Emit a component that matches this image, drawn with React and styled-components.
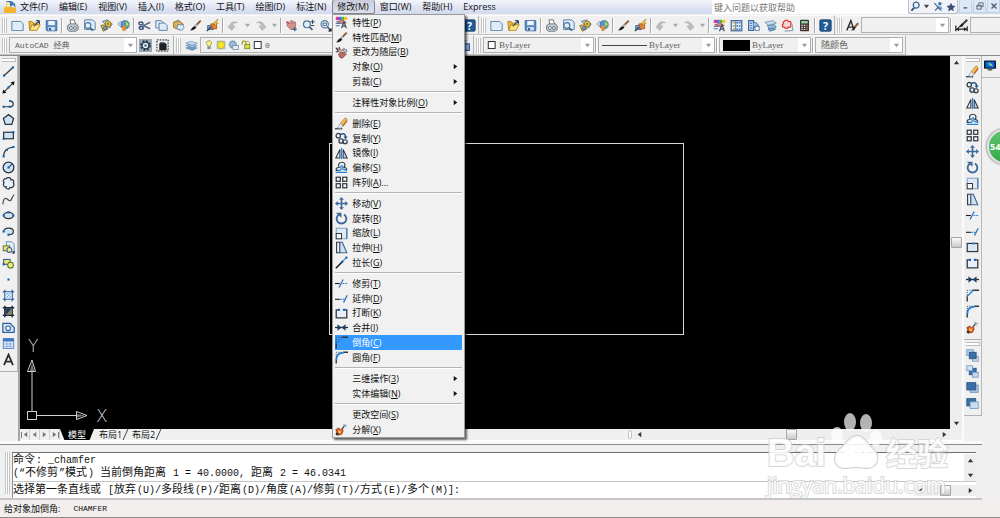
import React from "react";
import styled, { createGlobalStyle, css } from "styled-components";

const Global = createGlobalStyle`
  *, *::before, *::after { box-sizing: border-box; }
  body {
    margin: 0;
    background: #f0f0f0;
    font-family: "Open Sans", "Noto Sans CJK SC", sans-serif;
    font-size: 9px;
    color: #111;
  }
  button, input, select { font: inherit; color: inherit; margin: 0; padding: 0; border: 0; background: none; border-radius: 0; }
  ul { list-style: none; margin: 0; padding: 0; }
`;

/* ---------- icons (16 x 16 grid) ---------- */

const B = "#2f5f9e";
const D = "#30363f";
const L = "#cfe3f5";

const page = (x, y, w, h, fill = "#dcecf9") => (
  <path d={`M${x} ${y}h${w - 3}l3 3v${h - 3}h-${w}z`} fill={fill} stroke="#5d83ab" strokeWidth="1.2" />
);
const dot = (x, y, c = "#1463b4") => <rect key={`${x}-${y}`} x={x - 1.3} y={y - 1.3} width="2.6" height="2.6" fill={c} />;
const lens = (x, y, r = 3.6) => (
  <>
    <path d={`M${x + r - 1} ${y + r - 1}l3.6 3.6`} stroke="#46607f" strokeWidth="2.2" />
    <circle cx={x} cy={y} r={r} fill="#dff0fb" stroke="#4f7399" strokeWidth="1.4" />
  </>
);

const ICONS = {
  new: <>{page(1, 3, 14, 11)}<path d="M3 12.500h10" stroke="#fff" /></>,
  open: <><path d="M1 3h4l1 2h5v8H2z" fill="#e6ba3c" stroke="#a97c1a" /><path d="M2 14l3-7h10l-4 7z" fill="#ffe27a" stroke="#a97c1a" /><path d="M7 9l7-7M14 2v4M14 2h-4" stroke="#3b4a5a" strokeWidth="1.500" fill="none" /></>,
  save: <><path d="M1.500 2h13v12.500h-12l-1-1z" fill="#5b8fca" stroke="#2c5a94" /><rect x="4" y="2.500" width="8" height="5" fill="#eef6fd" /><rect x="4" y="10" width="8" height="4" fill="#dce8f3" /><rect x="5" y="11" width="2.500" height="3" fill="#2c5a94" /></>,
  print: <><path d="M5 1h5l2 6H6z" fill="#fff" stroke="#55606e" /><path d="M2 8l3-2h8l2 3v4l-3 2H4l-2-2z" fill="#c7ced8" stroke="#56616f" /><circle cx="6" cy="11" r="1.800" fill="#fff" stroke="#56616f" /><circle cx="11" cy="11" r="1.800" fill="#e9eef4" stroke="#56616f" /></>,
  preview: <>{page(2, 1, 13, 12)}{lens(6, 8)}</>,
  publish: <><path d="M3 3l6-2 6 5-3 5z" fill="#bcd5ee" stroke="#496b91" /><circle cx="10" cy="6" r="3.500" fill="#f5cf3d" stroke="#8b6a12" /><circle cx="10" cy="6" r="1.300" fill="#7a6a45" /><path d="M1 8l6-1 3 5-6 3z" fill="#f2c43a" stroke="#6d5b26" /><circle cx="6" cy="11" r="2" fill="#7aa4d3" stroke="#2f5f9e" /></>,
  globe: <><path d="M1 6l4-3 4 4-3 4z" fill="#e6eef7" stroke="#6b7f97" /><circle cx="10" cy="7" r="5" fill="#4d94d8" stroke="#39678f" /><path d="M9 2l3 5-2 5 5-3c0-5-2-7-6-7z" fill="#5fb35a" /><path d="M6 9l4-2 1 7-4 1z" fill="#e58b3a" /><path d="M11 4l3 2-2 3z" fill="#f4df60" /></>,
  cut: <><path d="M15 4L6 8.500M15 12L6 8" stroke="#596a80" strokeWidth="1.800" /><ellipse cx="3.600" cy="5.500" rx="2.500" ry="1.800" fill="none" stroke="#31507e" strokeWidth="1.700" /><ellipse cx="4" cy="11" rx="2.500" ry="1.800" fill="none" stroke="#31507e" strokeWidth="1.700" /></>,
  copy2: <>{page(1, 2, 10, 9)}{page(5, 5, 10, 9)}</>,
  paste: <><path d="M2 4l6-2.500 6 5-4 7-8-3z" fill="#e4b54f" stroke="#7f5f1e" /><path d="M7 7l6 0 2 3-3 4-6-2z" fill="#dcecf9" stroke="#5d7ea3" /><path d="M5 3l3-1 1 2-3 1z" fill="#8d97a5" /></>,
  brush: <><path d="M14.500 2L8 8.500" stroke="#8b5a2b" strokeWidth="2.400" /><path d="M9.500 7L6.500 10" stroke="#b9bfc6" strokeWidth="3" /><path d="M7.500 9c-2 0-4 2-6 5 3 0 6-1 7.500-3.500z" fill="#1c1c1c" /></>,
  block: <><path d="M2 8h7v5H2z" fill="#6fa6e0" stroke="#2f5f9e" /><path d="M6 6h7v6H7z" fill="#f0843c" stroke="#a54a16" /><path d="M15 0L8 6h3l-3 4 7-5h-3z" fill="#ffd43b" stroke="#9f6b10" strokeWidth=".7" /><path d="M1 15l5-5" stroke="#333" strokeWidth="1.500" /></>,
  undo: <path d="M3 8.500C4 4 9 2 13 4.500 9 4 7 6 7 9l3-.5L6 14 1 9.500z" fill="#b9bcc0" stroke="#a2a5a9" strokeWidth=".6" />,
  redo: <path d="M13 8.500C12 4 7 2 3 4.500 7 4 9 6 9 9l-3-.5 4 5.500 5-4.500z" fill="#b9bcc0" stroke="#a2a5a9" strokeWidth=".6" />,
  pan: <><path d="M2 4l2-1 3 3V2l2 0 1 4 1-3 2 1 0 6-2 3H7L3 9z" fill="#d99089" stroke="#9c5750" strokeWidth=".8" /><path d="M12 10v5M9.500 12.500h5" stroke="#2c5a94" strokeWidth="1.500" /><path d="M2 3l3 3" stroke="#6d3d3a" /></>,
  zoom: <>{lens(6, 6.500, 4.200)}<path d="M13 1v5M10.500 3.500h5M11 8h4" stroke="#2b3d52" strokeWidth="1.200" /></>,
  zoomwin: <>{lens(7, 6.500, 4.500)}<rect x="5" y="5" width="4" height="3" fill="none" stroke="#3a5a7d" /><path d="M15.500 11v4.500H11z" fill="#111" /></>,
  props: <><rect x="1" y="1" width="4" height="4" fill="#e0349e" /><rect x="5" y="1" width="3" height="4" fill="#3c6ae0" /><rect x="8" y="1" width="3" height="4" fill="#42b54a" /><rect x="11" y="1" width="4" height="4" fill="#f2c522" /><path d="M2 7l7-2 5 3-4 2z" fill="#d9857b" stroke="#7d4a46" strokeWidth=".7" /><path d="M1 9h6M1 12h5" stroke="#4f77ab" strokeWidth="1.500" /><path d="M8 15l3-8 3 8M9 12.500h4" fill="none" stroke="#3d4b60" strokeWidth="1.400" /></>,
  design: <><rect x="1.500" y="2" width="13" height="12.500" fill="#e3effa" stroke="#3f6a9e" strokeWidth="1.500" />{[4, 8, 12].map((y) => <g key={y}><rect x="3.500" y={y - .5} width="2.500" height="2" fill="#d69b2d" /><rect x="8" y={y - .5} width="2" height="2" fill="#3a74b8" /><rect x="11" y={y - .5} width="2" height="2" fill="#3a74b8" /></g>)}<path d="M7 2v12" stroke="#3f6a9e" /></>,
  palette: <><path d="M2 2h6v12H2z" fill="#d7e7f6" stroke="#3f6a9e" strokeWidth="1.500" /><path d="M3.500 5h3M3.500 8h3M3.500 11h3" stroke="#3a74b8" strokeWidth="1.500" /><path d="M8 4c4 0 6 2 6 6l-6 0" fill="#9fc1e4" stroke="#2f5f9e" /><path d="M10 9h5v5h-5z" fill="#fff" stroke="#2f5f9e" /></>,
  sheets: <><path d="M1 4l10-2 4 3-9 3z" fill="#c8dbec" stroke="#6d8fae" /><path d="M4 8l9-1 2 3-8 3z" fill="#9cbfdd" stroke="#527a9f" /><path d="M5 12l8-1 1 2-7 2z" fill="#6fa0cb" stroke="#527a9f" /></>,
  markup: <><path d="M4 3c1-2 4-2 5 0 3-1 4 2 3 4 1 2-1 4-3 3-1 2-4 2-5 0-3 0-3-3-1-4-1-2 0-3 1-3z" fill="#fbd5d5" stroke="#dc3636" strokeWidth="1.500" /><path d="M13.500 6l1 8-10 1" fill="none" stroke="#9aa6b5" strokeWidth="1.600" /></>,
  calc: <><rect x="2.500" y="1" width="11" height="14" rx="1" fill="#35322f" /><rect x="4" y="2.500" width="8" height="3" fill="#8fd49a" />{[7, 9.500, 12].map((y) => [4, 7, 10].map((x) => <rect key={`${x}${y}`} x={x} y={y} width="2" height="1.500" fill={x === 10 ? "#e36d4f" : "#cfcfcf"} />))}</>,
  help: <><rect x="1" y="1" width="14" height="14" rx="1.500" fill="#1f5c97" stroke="#153f69" /><text x="8" y="13" textAnchor="middle" fontSize="13" fontWeight="700" fill="#fff" fontFamily="Open Sans">?</text></>,
  textstyle: <><path d="M1 14L6 2l4 12M3 10h5" fill="none" stroke="#2b3038" strokeWidth="1.800" /><path d="M15 5l-5 6" stroke="#9a5a26" strokeWidth="2.600" /><path d="M10 9l-4 6 6-4z" fill="#222" /></>,
  dimstyle: <><path d="M1 8v7M15 9v6M1 12.500h14" stroke="#222" strokeWidth="1.500" /><path d="M1 12.500l4-2.500v5zM15 12.500l-4-2.500v5z" fill="#222" /><path d="M15 1L8 8" stroke="#3d444d" strokeWidth="2.800" /><path d="M9 5l-6 6 7-2z" fill="#222" /></>,
  gear: <><rect x="0" y="0" width="16" height="16" fill="#9aa7b4" /><circle cx="8" cy="8" r="5" fill="none" stroke="#1f2b38" strokeWidth="3" strokeDasharray="2.200 1.700" /><circle cx="8" cy="8" r="4" fill="#eaf1f8" stroke="#25364a" strokeWidth="1.400" /><circle cx="8" cy="8" r="1.600" fill="#3e6c9f" /></>,
  homews: <><rect x="1" y="1" width="14" height="14" fill="none" stroke="#6a7079" strokeWidth="2" strokeDasharray="2 1.500" /><rect x="4" y="6" width="9" height="8" fill="#1e2227" /><path d="M4 6l1-2h5l3 2z" fill="#33383f" /></>,
  layers: <><path d="M1 11l6-2 8 2-6 3z" fill="#6f9dc7" stroke="#4f7ba5" strokeWidth=".7" /><path d="M1 8l6-2 8 2-6 3z" fill="#94bbdd" stroke="#5580a9" strokeWidth=".7" /><path d="M1 5l6-2 8 2-6 3z" fill="#c5dcef" stroke="#5580a9" strokeWidth=".7" /></>,
  bulb: <><path d="M8 1c4 0 5 4 3 6.500L10 10H6L5 7.500C3 5 4 1 8 1z" fill="#fdf28a" stroke="#8d8a3c" strokeWidth="1.200" /><path d="M6 11h4v3H6z" fill="#9aa8b5" stroke="#57646f" strokeWidth=".8" /></>,
  sun: <><rect x="1" y="1" width="14" height="14" fill="#aac3d6" /><circle cx="8" cy="8" r="6" fill="#f5e32e" stroke="#a39a28" /></>,
  vpfreeze: <><circle cx="7" cy="6.500" r="5" fill="#9bbbd5" stroke="#6a8ba8" strokeWidth="2" strokeDasharray="2 1" /><rect x="7" y="8" width="8" height="6" fill="#e4edf5" stroke="#5f7e9b" /></>,
  lock: <><path d="M2 7V4c0-3 6-3 6 0v4" fill="none" stroke="#9a9b22" strokeWidth="2" /><rect x="6" y="7" width="8" height="7" fill="#d7dd3f" stroke="#82851d" strokeWidth="1.300" /><path d="M9 3c2-2 5 0 5 4" fill="none" stroke="#9a9b22" strokeWidth="1.500" /></>,
  swatch: <rect x="2" y="2.500" width="11" height="11" fill="#fff" stroke="#222" strokeWidth="1.500" />,
  layerprev: <><rect x="2" y="6" width="12" height="8" fill="#8db6de" stroke="#2f5f9e" strokeWidth="1.500" /><path d="M5 6V2h5" fill="none" stroke="#2f5f9e" strokeWidth="1.500" /></>,
  bylayer: <><path d="M3 3l5 2 3-2 4 3-5 3-6-2z" fill="#d9b4ad" stroke="#7b6a69" /><path d="M1 2l3 4M5 1l1 3M1 7l3 0" stroke="#333" strokeWidth="1.300" /><path d="M4 10l5-2 5 2-5 5-3-1z" fill="#bf6e5e" stroke="#6f3a33" strokeWidth=".8" /><path d="M9 5l5-1v4z" fill="#dfe6ee" stroke="#58697e" strokeWidth=".7" /></>,

  line: <><path d="M2 13.500L13.500 3" stroke={D} strokeWidth="1.500" />{dot(2.500, 13)}{dot(13.500, 3)}</>,
  xline: <><path d="M2 14L14 2" stroke={D} strokeWidth="1.500" /><path d="M.5 15.500l1-5 4 4zM15.500.5l-5 1 4 4z" fill="#111" />{dot(8, 8)}</>,
  pline: <><path d="M2 12h8c5 0 5-7 0-7" fill="none" stroke={D} strokeWidth="1.500" />{dot(2, 12)}{dot(9.500, 12)}{dot(10, 5)}</>,
  polygon: <path d="M8 2l6.300 4.700L12 14H4L1.700 6.700z" fill={L} stroke={D} strokeWidth="1.600" />,
  rect: <><rect x="2" y="4" width="12" height="8" fill={L} stroke={D} strokeWidth="1.500" />{dot(2, 12)}{dot(14, 4)}</>,
  arc: <><path d="M2 14C2 7 7 3 14 2.500" fill="none" stroke={D} strokeWidth="1.500" />{dot(2, 14)}{dot(6, 6)}{dot(14, 2.500)}</>,
  circle: <><circle cx="8" cy="8" r="6.600" fill={L} stroke={D} strokeWidth="1.600" /><path d="M8 8l4-4" stroke={B} strokeWidth="1.600" />{dot(8, 8)}</>,
  revcloud: <path d="M5 2c2-2 6-2 6 1.500 3-1 4 2 3 3.500 2 3-1 7-4 6-1 3-6 2-5-1-3 1-4-3-2.500-5-2-3 0-5 2.500-5z" fill="#e6f1fb" stroke={D} strokeWidth="1.500" />,
  spline: <path d="M1 14C2 5 5 6 7 8s4 2 5-1 1-3 3-5" fill="none" stroke="#4b525c" strokeWidth="1.500" />,
  ellipse: <><ellipse cx="8" cy="8" rx="6" ry="3.800" fill={L} stroke={D} strokeWidth="1.500" />{dot(2, 8)}{dot(14, 8)}{dot(8, 4)}</>,
  earc: <><path d="M2 8c1-6 12-5 12 0 0 3-3 4-6 4" fill={L} stroke={D} strokeWidth="1.500" />{dot(2, 8)}{dot(8, 12)}</>,
  insert: <><path d="M5 1h7l3 3v9H7z" fill="#e2eef9" stroke="#4d7bab" /><rect x="1.500" y="6" width="8" height="6" fill="#f2e37c" stroke="#55751f" strokeWidth="1.200" /><circle cx="9" cy="11" r="3" fill="#f7ea8b" stroke={B} strokeWidth="1.300" /><path d="M15.500 12v3.500H12z" fill="#111" /></>,
  makeblock: <><rect x="2" y="3" width="8" height="6" fill="#f4e36a" stroke={B} strokeWidth="1.300" /><circle cx="10.500" cy="10" r="3.500" fill="#f7ea8b" stroke="#55751f" strokeWidth="1.300" />{dot(2, 9)}</>,
  point: dot(8, 8),
  hatch: <><path d="M3.500 1v14M12.500 1v14M1 3.500h14M1 12.500h14" stroke={B} strokeWidth="1.600" /><rect x="4" y="4" width="8" height="8" fill="#d8e9f8" /><path d="M4 8l4-4M4 12l8-8M8 12l4-4" stroke="#6b9ccb" /></>,
  gradient: <><path d="M3.500 1v14M12.500 1v14M1 3.500h14M1 12.500h14" stroke="#1d2940" strokeWidth="1.800" /><rect x="4" y="4" width="8" height="8" fill="#26375c" /><path d="M12 4v8H5z" fill="#8b8a55" /></>,
  region: <><path d="M1 3h9l5 5v6H1z" fill="#cfe3f5" stroke={B} strokeWidth="1.500" /><circle cx="7.500" cy="9" r="2.800" fill="#fff" stroke={B} strokeWidth="1.400" /></>,
  table: <><rect x="1.500" y="2" width="13" height="12" fill="#e6f0fb" stroke="#3f74c0" /><rect x="1.500" y="2" width="13" height="3.500" fill="#3f74c0" /><path d="M6 5v9M10 5v9M2 8.500h12M2 11.500h12" stroke="#7fa5da" /></>,
  mtext: <path d="M2.500 15L8 2l5.500 13M4.500 10.500h7" fill="none" stroke="#2b2e33" strokeWidth="2.200" />,

  erase: <><path d="M0 14.500h9" stroke="#111" strokeWidth="1.300" /><path d="M12.500 1L15 3 9.500 10.500 6.500 8z" fill="#f0c64a" stroke="#86662a" strokeWidth=".7" /><path d="M15 3v2.500L10 12l-.5-1.500z" fill="#c8542f" /><path d="M6.500 8l3 2.500L7 14l-4-.5z" fill="#e5eef7" stroke="#7d8ea0" strokeWidth=".8" /></>,
  copy: <><circle cx="4" cy="4.500" r="2.700" fill="#eaf2fa" stroke={D} strokeWidth="1.500" /><circle cx="7.500" cy="11" r="2.700" fill="#dbeafa" stroke={D} strokeWidth="1.500" /><circle cx="12.500" cy="12" r="2.500" fill="#dbeafa" stroke={D} strokeWidth="1.400" /><path d="M7 3c4-2 6 0 6 3" fill="none" stroke="#1c4f8d" strokeWidth="1.700" /><path d="M10.500 5.500h5L13 9z" fill="#1c4f8d" /></>,
  mirror: <><path d="M6 3v10.500H1z" fill="#e8eef5" stroke={D} strokeWidth="1.300" /><path d="M10 3v10.500h5z" fill="#b7d5f1" stroke={D} strokeWidth="1.300" /><path d="M8 1v14" stroke="#2b86d9" strokeWidth="1.500" /></>,
  offset: <><path d="M4.500 11.500h-3V9.500c0-1 1.500-1.500 3.500-1.500C3 4 5.500 1.500 8.500 1.500S14 4.500 11 8c2.500 0 3.500 1.500 3.500 3.500" fill="#eaf2fa" stroke={D} strokeWidth="1.400" /><path d="M1 14h14M4 11.500h3c1.500-1 0-3 0-4s1-2 2-1.500 1 1.500.5 3 2.500 2 5.500 2.500" fill="none" stroke="#2b7fd0" strokeWidth="1.500" /></>,
  array: <g fill="#f3f6fa" stroke={D} strokeWidth="1.500"><rect x="1.500" y="1.500" width="5" height="5" /><rect x="9.500" y="1.500" width="5" height="5" /><rect x="1.500" y="9.500" width="5" height="5" /><rect x="9.500" y="9.500" width="5" height="5" /></g>,
  move: <path d="M8 0l3 3.500H9V7h3.500V5L16 8l-3.500 3V9H9v3.500h2L8 16l-3-3.500h2V9H3.500v2L0 8l3.500-3v2H7V3.500H5z" fill="#3c6a9e" />,
  rotate: <><path d="M5 3a6 6 0 1 0 6 0" fill="none" stroke="#3f699b" strokeWidth="2.300" /><path d="M1 1h7v6z" fill="#3f699b" /></>,
  scale: <><rect x="1.500" y="1.500" width="13" height="13" fill="#dfeaf5" stroke="#7f9fc0" strokeWidth="1.200" /><path d="M14.500 1.500v13" stroke="#4677ab" strokeWidth="1.500" /><rect x="1.500" y="8" width="6.500" height="6.500" fill="#f6f9fc" stroke={D} strokeWidth="1.200" /></>,
  stretch: <><path d="M2 1.500h4v13H2z" fill="#f3f6fa" stroke={D} strokeWidth="1.400" /><path d="M6 1.500h3l5.500 13H6z" fill="#cfe0f0" stroke="#44678f" strokeWidth="1.400" /></>,
  lengthen: <><path d="M1 15l8-8" stroke="#111" strokeWidth="1.800" /><path d="M9 7l5-5" stroke="#3b83cf" strokeWidth="1.500" />{dot(9, 7)}{dot(14, 2)}</>,
  trim: <><path d="M0 8h6" stroke="#222" strokeWidth="1.400" /><path d="M9 8h7" stroke="#2b86d9" strokeWidth="1.400" strokeDasharray="2.500 1" /><path d="M5 13L10 3" stroke="#2f6fb3" strokeWidth="1.500" /></>,
  extend: <><path d="M0 9h6" stroke="#222" strokeWidth="1.400" /><path d="M6.500 9h5" stroke="#2b86d9" strokeWidth="1.400" strokeDasharray="2 1" /><path d="M10.500 13L15 4" stroke="#2f6fb3" strokeWidth="1.600" /></>,
  breakpt: <><rect x="1.500" y="3" width="13" height="10" fill="#dbe9f6" stroke={D} strokeWidth="1.500" />{dot(9, 3, "#2b86d9")}</>,
  break: <><path d="M5 3.500H1.500v10h13v-10H11" fill="#e7f0f8" stroke={D} strokeWidth="1.600" />{dot(5, 3.500)}{dot(11, 3.500)}</>,
  join: <><path d="M0 8h16" stroke="#1c2836" strokeWidth="1.600" /><path d="M3 4L8 8l-5 4zM13 4L8 8l5 4z" fill="#1f3f66" /></>,
  chamfer: <><path d="M1.500 15.500V9M8 1.500h8" stroke={D} strokeWidth="1.700" /><path d="M1.500 9L9 1.500" stroke="#2b86d9" strokeWidth="1.800" /><path d="M1.500 8V1.500H8" fill="none" stroke={D} strokeDasharray="1.500 1.500" /></>,
  fillet: <><path d="M1.500 15.500V10M10 1.500h6" stroke={D} strokeWidth="1.700" /><path d="M1.500 11C1.500 5 5 2 11 2" fill="none" stroke="#2b86d9" strokeWidth="2.400" /><path d="M1.500 8V1.500H8" fill="none" stroke={D} strokeDasharray="1.500 1.500" /></>,
  explode: <><path d="M1 8l4-2 1 3 3-3 1 4-2 4-5 1z" fill="#e2482d" stroke="#7f3b17" strokeWidth=".8" /><path d="M4 8l2 2 2-2-1 5-3-1z" fill="#ffd23d" /><rect x="1" y="12" width="3" height="3" fill="#333" /><path d="M9 7l3-4" stroke="#444" strokeWidth="1.500" /><path d="M12 1v3M15 3h-3M14 6l-2-2M10 2l2 1" stroke="#86a0b5" strokeWidth="1.100" /></>,

  front: <><rect x="1" y="1" width="8" height="7" fill="#bcd3ea" stroke="#6a93bd" /><rect x="8" y="9" width="7" height="6" fill="#d6e5f3" stroke="#6a93bd" /><rect x="4" y="4" width="8.500" height="8" fill="#3c6fa8" stroke="#2b5587" /></>,
  back: <><rect x="4" y="4" width="8.500" height="8" fill="#3c6fa8" stroke="#2b5587" /><rect x="1" y="1" width="7" height="6" fill="#d3e3f2" stroke="#6a93bd" /><rect x="8" y="9" width="7" height="6" fill="#c3d8ec" stroke="#6a93bd" /></>,
  above: <><rect x="5" y="5" width="10" height="9" fill="#a8c6e2" stroke="#6a93bd" /><rect x="1" y="2" width="11" height="9" fill="#3c6fa8" stroke="#2b5587" /></>,
  under: <><rect x="1" y="2" width="11" height="9" fill="#3c6fa8" stroke="#2b5587" /><rect x="5" y="6" width="10" height="8" fill="#c9dff1" stroke="#6a93bd" /></>,
  screen: <><rect x="0" y="2" width="16" height="11" rx="1" fill="#101820" /><rect x="2" y="3.500" width="12" height="8" fill="#0b62d6" /><path d="M4 5l5 1 3 4-5-1z" fill="#36c3c9" /><path d="M7 4l2 4 3 1z" fill="#f7d643" /><path d="M5 14.500h6" stroke="#222" strokeWidth="1.500" /></>,
  search: <><path d="M6 10l-4 4" stroke="#2c4770" strokeWidth="2.600" /><circle cx="9" cy="6" r="4.300" fill="#e3edf8" stroke="#3e608c" strokeWidth="1.800" /></>,
  person: <><circle cx="10" cy="4" r="2.500" fill="#3e6fa8" /><path d="M6 12c0-6 8-6 8 0z" fill="#7fa4cd" /><path d="M2 3l10 11M3 14l5-6" stroke="#3a5a86" strokeWidth="1.500" /></>,
  star: <path d="M8 1l2.200 4.700 5.100.6-3.800 3.500 1 5.200L8 12.400 3.500 15l1-5.200L.7 6.300l5.100-.6z" fill="#3d4f7d" />,
  app: <><path d="M3 0h7l5 4v9H3z" fill="#3d76b5" /><path d="M0 9c4-3 10-2 16 0v7H0z" fill="#f1b62d" /><path d="M3 1l5 1v6H3z" fill="#f9e6a2" /><path d="M9 8l3-3 3 4z" fill="#dfeaf5" /></>,
  min: <path d="M4 11h6" stroke="#4d5a70" strokeWidth="2.200" />,
  restore: <path d="M6 6V3h7v6h-3M3 7h7v6H3zM3 8h7" fill="none" stroke="#5b6579" strokeWidth="1.500" />,
  close: <path d="M4 4l8 8M12 4l-8 8" stroke="#4d5a70" strokeWidth="2.200" />,
};

const Svg = styled.svg`display: block; flex: none;`;
const Icon = ({ name, size = 13 }) => (
  <Svg width={size} height={size} viewBox="0 0 16 16" fill="none" aria-hidden="true">{ICONS[name]}</Svg>
);

const Tri = ({ dir = "down", color = "#333" }) => {
  const d = { down: "M1 2h6L4 6z", up: "M1 6h6L4 2z", left: "M6 1v6L2 4z", right: "M2 1v6l4-3z" }[dir];
  return <Svg width="7" height="7" viewBox="0 0 8 8" aria-hidden="true"><path d={d} fill={color} /></Svg>;
};

/* ---------- frame ---------- */

const Window = styled.div`
  position: relative;
  min-height: 100vh;
  display: flex;
  flex-direction: column;
  overflow: hidden;
  background: #f0f0f0;
`;

const MenuBar = styled.nav`
  display: flex;
  align-items: stretch;
  height: 14px;
  background: linear-gradient(#f4f6fc, #dde2f3 60%, #d3daef);
`;
const AppLogo = styled.div`width: 15px; padding-left: 4px; display: flex; align-items: center;`;
const MenuHost = styled.div`position: relative; display: flex;`;
const MenuButton = styled.button`
  padding: 0 5px;
  line-height: 12px;
  white-space: nowrap;
  border-right: 1px solid transparent;
  ${(p) => p.$open && css`
    border-right-color: #80848f;
    border-radius: 2px;
    background: linear-gradient(#c9cddc, #dfe2ec);
    box-shadow: inset 1px 0 #80848f, inset 0 -1px #80848f;
  `}
`;
const HelpSearch = styled.input`
  width: 196px;
  margin-left: auto;
  padding-left: 2px;
  background: #fff;
  &::placeholder { color: #777; opacity: 1; }
`;
const InfoTools = styled.div`
  display: flex;
  align-items: center;
  width: 50px;
  justify-content: space-around;
  border: 1px solid #b9c0cf;
  border-top: 0;
  border-radius: 0 0 3px 3px;
  background: #f1f3f9;
`;
const InfoButton = styled.button`display: flex; align-items: center;`;
const WindowButtons = styled.div`display: flex; gap: 1px; padding-left: 1px;`;
const WindowButton = styled.button`
  width: 13px;
  height: 13px;
  display: grid;
  place-items: center;
  border: 1px solid #c3d2e6;
  border-top: 0;
  background: #dce8f6;
`;

const Bars = styled.div`padding-top: 1px; border-bottom: 1px solid #8c8c8c;`;
const BarRow = styled.div`display: flex; height: 20px; overflow: hidden; white-space: nowrap;`;
const Toolbar = styled.div`
  display: flex;
  align-items: center;
  flex: none;
  padding: 0 ${(p) => p.$end || 0}px 0 2px;
  border-right: 1px solid #b4b4b4;
  border-bottom: 1px solid #c2c2c2;
  border-top: 1px solid #fbfbfb;
`;
const Grip = styled.span`
  width: 5px;
  height: 15px;
  margin-right: 2px;
  border: 1px solid #c4c4c4;
  border-width: 0 1px;
  background: linear-gradient(90deg, #fff 1px, #c4c4c4 1px, #c4c4c4 2px, #fff 2px);
`;
const ToolButton = styled.button`
  width: ${(p) => p.$w || 17}px;
  height: 16px;
  display: grid;
  place-items: center;
  flex: none;
`;
const Sep = styled.span`
  width: 4px;
  height: 15px;
  flex: none;
  background: linear-gradient(90deg, transparent 1px, #a8a8a8 1px, #a8a8a8 2px, #fff 2px, #fff 3px, transparent 3px);
`;

const ComboBox = styled.label`
  position: relative;
  display: flex;
  align-items: center;
  gap: 2px;
  flex: none;
  width: ${(p) => p.$w}px;
  height: 16px;
  padding: 0 12px 0 ${(p) => (p.$plain ? 5 : 3)}px;
  border: 1px solid #b0b0b0;
  background: #f0f0f0;
  color: #606060;
`;
const Select = styled.select`
  appearance: none;
  flex: 1;
  min-width: 0;
  height: 14px;
  outline: 0;
  font-family: ${(p) => (p.$mono ? '"Liberation Mono"' : '"Liberation Serif"')}, "Noto Sans CJK SC", serif;
  font-size: ${(p) => (p.$mono ? 8 : 9)}px;
`;
const ComboArrow = styled.span`
  position: absolute;
  top: 0;
  right: 0;
  bottom: 0;
  width: 12px;
  display: grid;
  place-items: center;
  background: #fff;
  pointer-events: none;
`;
const ColorChip = styled.span`width: 27px; height: 11px; background: #000;`;
const Stroke = styled.span`width: 45px; height: 1px; background: #444;`;

function Combo({ label, value, width, children, mono, plain }) {
  return (
    <ComboBox $w={width} $plain={plain}>
      {children}
      <Select aria-label={label} $mono={mono}><option>{value}</option></Select>
      <ComboArrow><Tri color="#9a9a9a" /></ComboArrow>
    </ComboBox>
  );
}

const TOOL_NAMES = { undo: "放弃", redo: "重做" };
function Tools({ items }) {
  return items.map((t, i) => {
    if (t === "|") return <Sep key={i} />;
    if (t === "v") return <ToolButton key={i} $w={10} aria-label="更多"><Tri color="#a5aab5" /></ToolButton>;
    return <ToolButton key={i} aria-label={TOOL_NAMES[t] || t}><Icon name={t} /></ToolButton>;
  });
}

const STANDARD = "new open save | print preview publish globe | cut copy2 paste brush block | undo v redo v | pan zoom zoomwin zoom | props design palette sheets markup calc | help".split(" ");
const STANDARD_2 = "new open save | print preview publish globe | brush block | undo v redo v | props design palette sheets markup calc | help".split(" ");

/* ---------- drop-down menu ---------- */

const Popup = styled.div`
  position: absolute;
  z-index: 5;
  top: 100%;
  left: 0;
  width: 133px;
  padding: 0 2px;
  border: 1px solid #9a9a9a;
  background: #f1f1f1;
  box-shadow: 2px 2px 2px rgba(0, 0, 0, 0.6);
`;
const Group = styled.ul`
  & + &::before {
    content: "";
    display: block;
    height: 6px;
    background: linear-gradient(transparent 2px, #b5b5b5 2px, #b5b5b5 3px, #fff 3px, #fff 4px, transparent 4px);
  }
`;
const Entry = styled.li`
  height: 15px;
  &:nth-child(3) { height: 14px; }
`;
const EntryButton = styled.button`
  display: grid;
  grid-template-columns: 17px 1fr 10px;
  align-items: center;
  width: 100%;
  height: 100%;
  text-align: left;
  white-space: nowrap;
  line-height: 14px;
  ${(p) => p.$active && css`background: #3399ff; color: #fff;`}
`;
const Key = styled.u`text-underline-offset: 1px;`;

const MENU = [
  [["props", "特性", "P"], ["brush", "特性匹配", "M"], ["bylayer", "更改为随层", "B"], [null, "对象", "O", ">"], [null, "剪裁", "C", ">"]],
  [[null, "注释性对象比例", "O", ">"]],
  [["erase", "删除", "E"], ["copy", "复制", "Y"], ["mirror", "镜像", "I"], ["offset", "偏移", "S"], ["array", "阵列", "A", "..."]],
  [["move", "移动", "V"], ["rotate", "旋转", "R"], ["scale", "缩放", "L"], ["stretch", "拉伸", "H"], ["lengthen", "拉长", "G"]],
  [["trim", "修剪", "T"], ["extend", "延伸", "D"], ["break", "打断", "K"], ["join", "合并", "J"], ["chamfer", "倒角", "C"], ["fillet", "圆角", "F"]],
  [[null, "三维操作", "3", ">"], [null, "实体编辑", "N", ">"]],
  [[null, "更改空间", "S"], ["explode", "分解", "X"]],
];

function ModifyMenu() {
  return (
    <Popup>
      {MENU.map((group, g) => (
        <Group key={g}>
          {group.map(([icon, text, key, tail]) => (
            <Entry key={text}>
              <EntryButton $active={text === "倒角"}>
                <span>{icon && <Icon name={icon} />}</span>
                <span>{text}(<Key>{key}</Key>){tail === "..." && "..."}</span>
                {tail === ">" && <Tri dir="right" color="#111" />}
              </EntryButton>
            </Entry>
          ))}
        </Group>
      ))}
    </Popup>
  );
}

/* ---------- work area ---------- */

const Body = styled.div`flex: 1; display: flex;`;
const Main = styled.div`flex: 1; min-width: 0; display: flex; flex-direction: column;`;
const Work = styled.div`flex: 1; display: flex;`;
const SideBar = styled.div`
  width: 18px;
  flex: none;
  display: flex;
  flex-direction: column;
`;
const VPanel = styled.div`
  display: flex;
  flex-direction: column;
  align-items: center;
  padding: 2px 0 4px;
  border-right: 1px solid #b8b8b8;
  border-bottom: 1px solid #b0b0b0;
`;
const VGrip = styled.span`
  width: 14px;
  height: 4px;
  margin-bottom: 1px;
  border: 1px solid #bdbdbd;
  border-left: 0;
  background: #fff;
`;
const VButton = styled.button`width: 16px; height: 16px; display: grid; place-items: center;`;

const DRAW = "line xline pline polygon rect arc circle revcloud spline ellipse earc insert makeblock point hatch gradient region table mtext".split(" ");
const MODIFY = "erase copy mirror offset array move rotate scale stretch trim extend breakpt break join chamfer fillet explode".split(" ");
const ORDER = "front back above under".split(" ");

const VTools = ({ items }) => (
  <VPanel>
    <VGrip />
    {items.map((n) => <VButton key={n} aria-label={n}><Icon name={n} /></VButton>)}
  </VPanel>
);

const Center = styled.div`
  flex: 1;
  min-width: 0;
  display: flex;
  flex-direction: column;
  border-left: 2px solid #a6a6a6;
  border-right: 2px solid #fbfbfb;
`;
const View = styled.div`flex: 1; display: flex;`;
const Canvas = styled.div`position: relative; flex: 1; overflow: hidden; background: #000;`;
const Shape = styled.div`
  position: absolute;
  left: 309px;
  top: 87px;
  width: 355px;
  height: 192px;
  border: 1px solid #d8d8d8;
`;
const Ucs = styled.svg`position: absolute; left: 0; bottom: 0;`;

const VScroll = styled.div`
  width: 12px;
  display: flex;
  flex-direction: column;
  justify-content: space-between;
  align-items: center;
  background: #eeeeee;
`;
const HScroll = styled(VScroll)`
  width: ${(p) => p.$w || "auto"};
  height: 11px;
  flex-direction: row;
`;
const ScrollButton = styled.button`width: 12px; height: 12px; display: grid; place-items: center;`;
const Thumb = styled.span`
  width: 11px;
  height: 11px;
  border: 1px solid #a5a5a5;
  border-radius: 1px;
  background: linear-gradient(#fafafa, #c9c9c9);
`;

const TabRow = styled.div`
  display: flex;
  height: 12px;
  padding-right: 12px;
  align-items: stretch;
  background: #f0f0f0;
  border-bottom: 1px solid #fff;
`;
const TabNav = styled.button`
  width: 10px;
  display: flex;
  align-items: center;
  justify-content: center;
  border-right: 1px solid #d0d0d0;
`;
const Bar = styled.span`width: 1px; height: 6px; background: #777;`;
const Tab = styled.button`
  position: relative;
  height: 11px;
  width: ${(p) => (p.$on ? 34 : 33)}px;
  line-height: 10px;
  color: ${(p) => (p.$on ? "#fff" : "#111")};
  ${(p) => p.$on
    ? css`background: #000; clip-path: polygon(0 0, 100% 0, 87% 100%, 13% 100%);`
    : css`&::after { content: ""; position: absolute; right: 1px; top: 0; height: 11px; border-right: 1px solid #444; transform: skewX(-24deg); }`}
`;
const TabGap = styled.span`flex: 1;`;
const Splitter = styled.span`width: 4px; margin: 1px 2px 1px 0; border: 1px solid #c2c2c2; border-radius: 2px; background: #fff;`;

/* ---------- command window ---------- */

const Dock = styled.div`
  padding-top: 3px;
  background: linear-gradient(#fafafa 3px, transparent 3px);
`;
const DockInner = styled.div`
  display: grid;
  grid-template-columns: 12px 1fr;
  padding: 7px 6px 0 0;
  border-top: 1px solid #8a8a8a;
  border-bottom: 2px solid #c4c4c4;
`;
const DockGrip = styled(Grip)`height: 42px; margin: 0 0 0 5px;`;
const Console = styled.section`
  border-top: 1px solid #6f6f6f;
  border-left: 1px solid #8d8d8d;
  background: #fff;
  font-family: "Liberation Mono", "Noto Sans CJK SC", monospace;
  font-size: 10px;
  line-height: 12px;
  white-space: pre;
`;
const History = styled.div`
  display: flex;
  justify-content: space-between;
  height: 29px;
  padding-top: 1px;
  border-bottom: 1px solid #c6c6c6;
`;
const Prompt = styled.div`display: flex; align-items: center; height: 16px; padding-top: 1px;`;
const CommandInput = styled.input`flex: 1; min-width: 0; outline: 0;`;
const Zh = styled.span`font-size: 11px; padding-right: 1px;`;

/* Sets Chinese runs one size larger than the Latin around them. */
const Mixed = ({ children }) =>
  children.split(/([\u4e00-\u9fff]+)/).map((t, i) => (i % 2 ? <Zh key={i}>{t}</Zh> : t));

const Status = styled.footer`
  height: 18px;
  padding: 1px 0 0 4px;
  display: flex;
  align-items: center;
  gap: 13px;
  background: #f2eeed;
  border-bottom: 1px solid #8c8a84;
  line-height: 12px;
`;
const StatusCommand = styled.span`font-family: "Liberation Mono", monospace; font-size: 8px;`;

const SidePanel = styled.div`
  height: 22px;
  padding: 3px 0 0 2px;
  border-bottom: 1px solid #b8b8b8;
`;
const Bubble = styled.div`
  position: absolute;
  right: -22px;
  top: 129px;
  width: 35px;
  height: 35px;
  padding-left: 1px;
  border: 2px solid #e2e2e2;
  border-radius: 50%;
  background: linear-gradient(#5fc46c, #35a94a);
  box-shadow: 0 0 2px 1px #999;
  color: #fff;
  font-weight: 700;
  line-height: 31px;
`;

/* ---------- watermark ---------- */

const Mark = styled.div`
  position: absolute;
  right: 52px;
  bottom: 22px;
  width: 181px;
  pointer-events: none;
  color: rgba(255, 255, 255, 0.9);
  -webkit-text-stroke: 2px rgba(205, 205, 205, 0.75);
  paint-order: stroke fill;
`;
const MarkTop = styled.div`
  display: flex;
  align-items: flex-end;
  justify-content: space-between;
  margin-bottom: 4px;
  font: 700 38px/34px "Liberation Sans", sans-serif;
`;
const MarkZh = styled.span`font: 700 31px/36px "Noto Sans CJK SC", sans-serif;`;
const MarkUrl = styled.div`font: 21px/22px "Open Sans", sans-serif;`;

function Watermark() {
  return (
    <Mark>
      <MarkTop>
        <span>Bai</span>
        <svg width="54" height="58" viewBox="0 0 54 58" aria-label="du">
          <g fill="#fff" fillOpacity=".7" stroke="none">
            <ellipse cx="8" cy="23" rx="6" ry="8" />
            <ellipse cx="21" cy="10" rx="6" ry="9" />
            <ellipse cx="37" cy="11" rx="6" ry="9" />
            <ellipse cx="47" cy="26" rx="6" ry="8" />
          </g>
          <path d="M28 24c7 0 10 8 16 13 7 6 6 18-5 19-5 0-8-1-12-1s-7 1-12 1C4 55 4 44 10 38c7-5 10-14 18-14z" fill="#fff" fillOpacity=".85" stroke="#cfcfcf" strokeWidth="2" />
          <text x="27" y="51" textAnchor="middle" fontSize="22" fontWeight="700" fill="#fff" fontFamily="Liberation Sans">du</text>
        </svg>
        <MarkZh>经验</MarkZh>
      </MarkTop>
      <MarkUrl>jingyan.baidu.com</MarkUrl>
    </Mark>
  );
}

const MENUS = ["文件(F)", "编辑(E)", "视图(V)", "插入(I)", "格式(O)", "工具(T)", "绘图(D)", "标注(N)", "修改(M)", "窗口(W)", "帮助(H)", "Express"];

export default function App() {
  return (
    <Window>
      <Global />
      <MenuBar>
        <AppLogo><Icon name="app" size={12} /></AppLogo>
        {MENUS.map((m) => (
          <MenuHost key={m}>
            <MenuButton $open={m === "修改(M)"}>{m}</MenuButton>
            {m === "修改(M)" && <ModifyMenu />}
          </MenuHost>
        ))}
        <HelpSearch aria-label="帮助搜索" placeholder="键入问题以获取帮助" />
        <InfoTools>
          <InfoButton aria-label="搜索"><Icon name="search" size={11} /></InfoButton>
          <InfoButton aria-label="搜索选项"><Tri color="#444" /></InfoButton>
          <InfoButton aria-label="通讯中心"><Icon name="person" size={11} /></InfoButton>
          <InfoButton aria-label="收藏夹"><Icon name="star" size={10} /></InfoButton>
        </InfoTools>
        <WindowButtons>
          <WindowButton aria-label="最小化"><Icon name="min" size={10} /></WindowButton>
          <WindowButton aria-label="还原"><Icon name="restore" size={10} /></WindowButton>
          <WindowButton aria-label="关闭"><Icon name="close" size={10} /></WindowButton>
        </WindowButtons>
      </MenuBar>

      <Bars>
        <BarRow>
          <Toolbar><Grip /><Tools items={STANDARD} /></Toolbar>
          <Toolbar><Grip /><Tools items={STANDARD_2} /></Toolbar>
          <Toolbar>
            <Grip />
            <Tools items={["textstyle"]} />
            <Combo label="文字样式" value="" width={88} />
            <Sep />
            <Tools items={["dimstyle"]} />
            <Combo label="标注样式" value="" width={88} />
          </Toolbar>
        </BarRow>
        <BarRow>
          <Toolbar $end={2}>
            <Grip />
            <Combo label="工作空间" value="AutoCAD 经典" width={128} mono plain />
            <Tools items={["gear", "homews"]} />
          </Toolbar>
          <Toolbar>
            <Grip />
            <Tools items={["layers"]} />
            <Combo label="图层" value="0" width={256} mono>
              <Icon name="bulb" size={10} />
              <Icon name="sun" size={10} />
              <Icon name="vpfreeze" size={11} />
              <Icon name="lock" size={10} />
              <Icon name="swatch" size={10} />
            </Combo>
            <Tools items={["layerprev"]} />
          </Toolbar>
          <Toolbar $end={2}>
            <Grip />
            <Combo label="颜色" value="ByLayer" width={111}><Icon name="swatch" size={10} /></Combo>
            <Sep />
            <Combo label="线型" value="ByLayer" width={117}><Stroke /></Combo>
            <Sep />
            <Combo label="线宽" value="ByLayer" width={92}><ColorChip /></Combo>
            <Sep />
            <Combo label="打印样式" value="随颜色" width={88} plain />
          </Toolbar>
        </BarRow>
      </Bars>

      <Body>
        <Main>
          <Work>
            <SideBar><VTools items={DRAW} /></SideBar>
            <Center>
              <View>
                <Canvas>
                  <Shape />
                  <Ucs width="100" height="100" viewBox="0 0 100 100" fill="none" stroke="#d0d0d0">
                    <rect x="7.500" y="82.500" width="9" height="8" />
                    <path d="M12 82V43M7.500 42.500h8L12 31zM17 86.500h39M56.500 82.500v8L67 86.500z" />
                    <path d="M10 42l2-8 2 8zM57 85l8 1.500-8 2z" fill="#777" stroke="none" />
                    <g fill="#d0d0d0" stroke="none" fontFamily="DejaVu Sans, sans-serif" fontWeight="200" fontSize="17">
                      <text x="8" y="23">Y</text>
                      <text x="76" y="93">X</text>
                    </g>
                  </Ucs>
                </Canvas>
                <VScroll>
                  <ScrollButton aria-label="向上"><Tri dir="up" /></ScrollButton>
                  <Thumb />
                  <ScrollButton aria-label="向下"><Tri /></ScrollButton>
                </VScroll>
              </View>
              <TabRow>
                <TabNav aria-label="第一个"><Bar /><Tri dir="left" color="#777" /></TabNav>
                <TabNav aria-label="上一个"><Tri dir="left" color="#777" /></TabNav>
                <TabNav aria-label="下一个"><Tri dir="right" color="#777" /></TabNav>
                <TabNav aria-label="最后一个"><Tri dir="right" color="#777" /><Bar /></TabNav>
                <Tab $on>模型</Tab>
                <Tab>布局1</Tab>
                <Tab>布局2</Tab>
                <TabGap />
                <Splitter />
                <HScroll $w="34%">
                  <ScrollButton aria-label="向左"><Tri dir="left" /></ScrollButton>
                  <Thumb />
                  <ScrollButton aria-label="向右"><Tri dir="right" /></ScrollButton>
                </HScroll>
              </TabRow>
            </Center>
            <SideBar>
              <VTools items={MODIFY} />
              <VTools items={ORDER} />
            </SideBar>
          </Work>
          <Dock>
            <DockInner>
              <DockGrip />
              <Console>
                <History>
                  <div>
                    <div><Mixed>{"命令: _chamfer"}</Mixed></div>
                    <div><Mixed>{"(“不修剪”模式) 当前倒角距离 1 = 40.0000, 距离 2 = 46.0341"}</Mixed></div>
                  </div>
                  <VScroll>
                    <ScrollButton aria-label="向上"><Tri dir="up" /></ScrollButton>
                    <ScrollButton aria-label="向下"><Tri /></ScrollButton>
                  </VScroll>
                </History>
                <Prompt>
                  <label htmlFor="command"><Mixed>{"选择第一条直线或 [放弃(U)/多段线(P)/距离(D)/角度(A)/修剪(T)/方式(E)/多个(M)]:"}</Mixed></label>
                  <CommandInput id="command" />
                  <HScroll $w="62px">
                    <ScrollButton aria-label="向左"><Tri dir="left" /></ScrollButton>
                    <Thumb />
                    <ScrollButton aria-label="向右"><Tri dir="right" /></ScrollButton>
                  </HScroll>
                </Prompt>
              </Console>
            </DockInner>
          </Dock>
        </Main>
        <SideBar>
          <SidePanel><Icon name="screen" size={12} /></SidePanel>
        </SideBar>
      </Body>
      <Status>
        <span>给对象加倒角:</span>
        <StatusCommand>CHAMFER</StatusCommand>
      </Status>
      <Bubble>54</Bubble>
      <Watermark />
    </Window>
  );
}
